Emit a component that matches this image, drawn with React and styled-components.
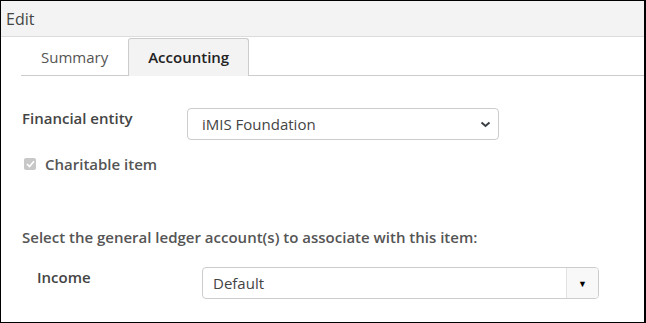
import React from "react"
import styled, { createGlobalStyle } from "styled-components"

const GlobalStyle = createGlobalStyle`
  html, body {
    margin: 0;
    padding: 0;
    background: #fff;
  }
  body {
    font-family: "Open Sans", "Liberation Sans", sans-serif;
    color: #444;
  }
`

const App = () => {
  return (
    <>
      <GlobalStyle />
      <Frame>
        <Header>Edit</Header>
        <TabBar>
          <Tab>Summary</Tab>
          <Tab active>Accounting</Tab>
        </TabBar>
        <Body>
          <FieldRow>
            <Label>Financial entity</Label>
            <SelectBox>
              <span>iMIS Foundation</span>
              <svg width="11" height="7" viewBox="0 0 11 7">
                <path
                  d="M1.5 1.5 L5.5 5 L9.5 1.5"
                  fill="none"
                  stroke="#3a3f44"
                  strokeWidth="2"
                />
              </svg>
            </SelectBox>
          </FieldRow>
          <CheckRow>
            <CheckBox>
              <svg width="9" height="8" viewBox="0 0 9 8">
                <path
                  d="M1 4 L3.5 6.5 L8 1.2"
                  fill="none"
                  stroke="#fff"
                  strokeWidth="1.6"
                />
              </svg>
            </CheckBox>
            <CheckLabel>Charitable item</CheckLabel>
          </CheckRow>
          <Instruction>
            Select the general ledger account(s) to associate with this item:
          </Instruction>
          <IndentRow>
            <Label>Income</Label>
            <Combo>
              <ComboText>Default</ComboText>
              <ComboButton>▼</ComboButton>
            </Combo>
          </IndentRow>
        </Body>
      </Frame>
    </>
  )
}

export default App

const Frame = styled.div`
  width: 646px;
  height: 323px;
  box-sizing: border-box;
  border: 1px solid #000;
  border-right-width: 2px;
  overflow: hidden;
  background: #fff;
`

const Header = styled.div`
  height: 35px;
  background: #f3f3f3;
  border-bottom: 1px solid #dcdcdc;
  display: flex;
  align-items: center;
  padding-left: 5px;
  font-size: 16px;
  color: #444;
`

const TabBar = styled.div`
  margin-left: 20px;
  height: 38px;
  border-bottom: 1px solid #ccc;
  display: flex;
  align-items: flex-end;
`

const Tab = styled.div`
  height: 38px;
  box-sizing: border-box;
  padding: 0 19px 2px;
  display: flex;
  align-items: center;
  font-size: 15px;
  margin-bottom: -1px;
  border: 1px solid ${(p) => (p.active ? "#ccc" : "transparent")};
  border-bottom: none;
  border-radius: 3px 3px 0 0;
  background: ${(p) => (p.active ? "#f3f3f3" : "transparent")};
  color: ${(p) => (p.active ? "#222" : "#555")};
  font-weight: ${(p) => (p.active ? 600 : 400)};
`

const Body = styled.div`
  padding: 32px 0 0 21px;
`

const FieldRow = styled.div`
  display: flex;
  align-items: flex-start;
`

const Label = styled.div`
  width: 165px;
  font-size: 15px;
  font-weight: 600;
  color: #444;
`

const SelectBox = styled.div`
  width: 312px;
  height: 32px;
  box-sizing: border-box;
  border: 1px solid #ccc;
  border-radius: 4px;
  display: flex;
  align-items: center;
  justify-content: space-between;
  padding: 0 7px 0 14px;
  font-size: 15px;
  color: #444;
`

const CheckRow = styled.div`
  display: flex;
  align-items: center;
  gap: 9px;
  margin-top: 14px;
  padding-left: 2px;
`

const CheckBox = styled.div`
  width: 12px;
  height: 12px;
  border-radius: 2px;
  background: #c8c8c8;
  display: flex;
  align-items: center;
  justify-content: center;
`

const CheckLabel = styled.div`
  font-size: 15px;
  font-weight: 600;
  color: #555;
`

const Instruction = styled.div`
  margin-top: 53px;
  font-size: 15px;
  font-weight: 600;
  color: #555;
`

const IndentRow = styled(FieldRow)`
  margin-top: 20px;
  padding-left: 15px;
`

const Combo = styled.div`
  width: 397px;
  height: 32px;
  box-sizing: border-box;
  border: 1px solid #ccc;
  border-radius: 4px;
  display: flex;
  overflow: hidden;
`

const ComboText = styled.div`
  flex: 1;
  display: flex;
  align-items: center;
  padding-left: 10px;
  font-size: 15px;
  color: #444;
`

const ComboButton = styled.div`
  width: 31px;
  border-left: 1px solid #e2e2e2;
  background: #f8f8f8;
  display: flex;
  align-items: center;
  justify-content: center;
  font-size: 9px;
  color: #000;
`
